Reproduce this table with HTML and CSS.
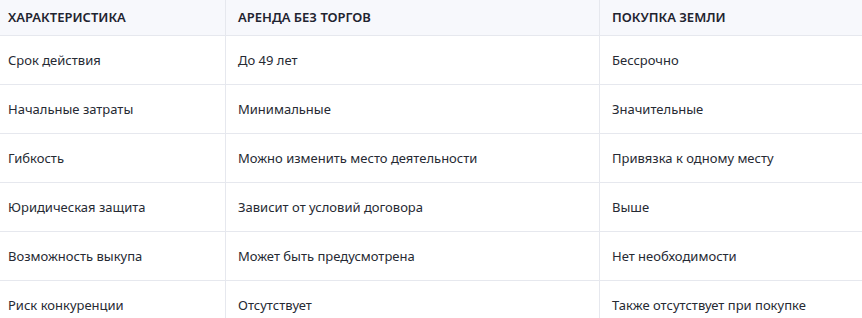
FILE: index.html
```html
<!DOCTYPE html>
<html lang="ru">
<head>
<meta charset="utf-8">
<link rel="stylesheet" href="styles.css">
</head>
<body>
<table class="cmp">
  <thead>
    <tr><th class="c1">ХАРАКТЕРИСТИКА</th><th class="c2">АРЕНДА БЕЗ ТОРГОВ</th><th class="c3">ПОКУПКА ЗЕМЛИ</th></tr>
  </thead>
  <tbody>
    <tr><td>Срок действия</td><td>До 49 лет</td><td>Бессрочно</td></tr>
    <tr><td>Начальные затраты</td><td>Минимальные</td><td>Значительные</td></tr>
    <tr><td>Гибкость</td><td>Можно изменить место деятельности</td><td>Привязка к одному месту</td></tr>
    <tr><td>Юридическая защита</td><td>Зависит от условий договора</td><td>Выше</td></tr>
    <tr><td>Возможность выкупа</td><td>Может быть предусмотрена</td><td>Нет необходимости</td></tr>
    <tr><td>Риск конкуренции</td><td>Отсутствует</td><td>Также отсутствует при покупке</td></tr>
  </tbody>
</table>
</body>
</html>
```
FILE: styles.css
```css
html, body { margin: 0; padding: 0; background: #fff; }
body { font-family: "Noto Sans", "Open Sans", sans-serif; font-size: 13px; color: #262a33; overflow: hidden; }
.cmp { border-collapse: collapse; width: 900px; table-layout: fixed; }
.cmp th, .cmp td { text-align: left; padding: 0 12px; border: 1px solid #e6e8ee; border-top: 0; line-height: 17px; }
.cmp th { background: #f7f8fc; font-weight: 600; height: 35px; color: #1f2430; }
.cmp td { height: 48px; }
.cmp th:first-child, .cmp td:first-child { padding-left: 8px; border-left: 0; }
.cmp .c1 { width: 205px; }
.cmp .c2 { width: 349px; }
.cmp .c3 { width: auto; }
```
